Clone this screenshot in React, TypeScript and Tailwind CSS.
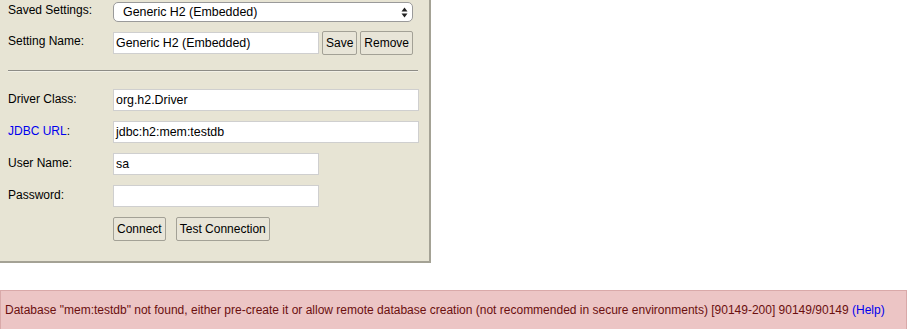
import { useState } from "react";

const font = { fontFamily: '"Liberation Sans", Arial, sans-serif' };

function Field({ value, wide }: { value: string; wide?: boolean }) {
  return (
    <div
      className={`h-[22px] border border-[#cfcfcf] bg-white px-[2px] text-[12.4px] leading-[20px] text-black ${
        wide ? "w-[306px]" : "w-[206px]"
      }`}
    >
      {value}
    </div>
  );
}

function Btn({ children }: { children: string }) {
  return (
    <button className="h-[24px] rounded-[2px] border border-[#a3a196] bg-[#e8e5d8] px-[3px] text-[12px] leading-[20px] text-black">
      {children}
    </button>
  );
}

export default function App() {
  const [rows] = useState([
    { label: "Driver Class:", value: "org.h2.Driver", wide: true },
    { label: "JDBC URL:", value: "jdbc:h2:mem:testdb", wide: true, link: true },
    { label: "User Name:", value: "sa" },
    { label: "Password:", value: "" },
  ]);

  return (
    <div className="h-[329px] w-[907px] overflow-hidden bg-white text-[12px]" style={font}>
      {/* Login panel */}
      <div className="h-[263px] w-[431px] border-r-2 border-b-2 border-[#a4a295] bg-[#e7e4d4] pl-[8px] pt-[2px]">
        <div className="flex h-[20px] items-start">
          <div className="w-[105px] pt-[1px] leading-[14px]">Saved Settings:</div>
          <div className="flex h-[20px] w-[300px] items-center justify-between rounded-[5px] border border-[#9a9a9a] bg-white pl-[9px] pr-[4px] text-[12.4px] leading-[16px]">
            <span>Generic H2 (Embedded)</span>
            <svg width="7" height="11" viewBox="0 0 7 11">
              <path d="M3.5 0.5 L6.5 4.5 L0.5 4.5 Z" fill="#222" />
              <path d="M3.5 10.5 L6.5 6.5 L0.5 6.5 Z" fill="#222" />
            </svg>
          </div>
        </div>

        <div className="mt-[9px] flex items-start">
          <div className="w-[105px] pt-[3px] leading-[14px]">Setting Name:</div>
          <div className="mt-[1px]">
            <Field value="Generic H2 (Embedded)" />
          </div>
          <div className="ml-[3px] flex gap-[3px]">
            <Btn>Save</Btn>
            <Btn>Remove</Btn>
          </div>
        </div>

        <div className="mt-[15px] w-[410px] border-t border-b border-t-[#8d8c86] border-b-[#f2f0e6]" />

        <div className="mt-[17px] flex flex-col gap-[10px]">
          {rows.map((r) => (
            <div key={r.label} className="flex items-start">
              <div className="w-[105px] pt-[3px] leading-[14px]">
                {r.link ? (
                  <>
                    <span className="text-[#0000ee]">JDBC URL</span>:
                  </>
                ) : (
                  r.label
                )}
              </div>
              <Field value={r.value} wide={r.wide} />
            </div>
          ))}
        </div>

        <div className="mt-[10px] flex gap-[10px] pl-[105px]">
          <Btn>Connect</Btn>
          <Btn>Test Connection</Btn>
        </div>
      </div>

      {/* Error */}
      <div className="mt-[27px] h-[40px] whitespace-nowrap border border-[#d9a9a9] bg-[#ecc5c5] pl-[4px] pt-[11px] leading-[16px] text-[#6b0f0f]">
        Database "mem:testdb" not found, either pre-create it or allow remote database creation (not
        recommended in secure environments) [90149-200] 90149/90149{" "}
        <span className="text-[#0000ee]">(Help)</span>
      </div>
    </div>
  );
}
